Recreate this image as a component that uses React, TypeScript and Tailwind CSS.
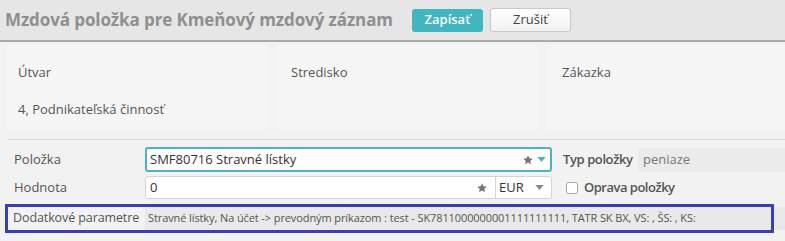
import React from "react";

const Star = ({ className }: { className?: string }) => (
  <svg viewBox="0 0 24 24" className={className} fill="currentColor">
    <path d="M12 2.5l2.9 6.2 6.6.7-4.9 4.5 1.4 6.6L12 17.1l-5.9 3.4 1.4-6.6-4.9-4.5 6.6-.7z" />
  </svg>
);

const Caret = ({ className }: { className?: string }) => (
  <svg viewBox="0 0 10 6" className={className} fill="currentColor">
    <path d="M0 0h10L5 6z" />
  </svg>
);

const App = () => {
  return (
    <div className="relative w-[785px] h-[241px] overflow-hidden bg-[#f2f2f2] font-['Open_Sans',sans-serif] text-[13px] text-[#555]">
      {/* header */}
      <div className="flex h-[42px] items-center border-b-2 border-[#a9a9a9] bg-[#e6e6e6] pl-[5px]">
        <h1 className="whitespace-nowrap text-[17px] font-bold tracking-[-0.1px] text-[#8f8f8f]">
          Mzdová položka pre Kmeňový mzdový záznam
        </h1>
        <button className="ml-[19px] h-[23px] w-[71px] rounded-[3px] bg-[#3fb6c0] text-[13px] font-semibold text-white">
          Zapísať
        </button>
        <button className="ml-[7px] h-[24px] w-[81px] rounded-[3px] border border-[#c8c8c8] bg-gradient-to-b from-white to-[#f1f1f1] text-[13px] text-[#444]">
          Zrušiť
        </button>
      </div>

      {/* top info panels */}
      <div className="flex gap-[8px] pl-[7px] pt-[3px]">
        <div className="h-[85px] w-[261px] shrink-0 bg-[#f5f5f6] px-[11px] pt-[18px]">
          <div className="leading-[18px]">Útvar</div>
          <div className="mt-[19px] leading-[18px]">4, Podnikateľská činnosť</div>
        </div>
        <div className="h-[85px] w-[263px] shrink-0 bg-[#f5f5f6] px-[15px] pt-[18px]">
          <div className="leading-[18px]">Stredisko</div>
        </div>
        <div className="h-[85px] flex-1 bg-[#f5f5f6] px-[15px] pt-[18px]">
          <div className="leading-[18px]">Zákazka</div>
        </div>
      </div>

      <div className="ml-[8px] mt-[9px] border-t border-[#d9d9d9]" />

      {/* form rows */}
      <div className="flex flex-col gap-[4px] pt-[7px]">
        <div className="flex h-[25px] items-center">
          <div className="w-[145px] shrink-0 whitespace-nowrap pl-[14px]">Položka</div>
          <div className="flex h-[25px] w-[407px] shrink-0 items-center rounded-[3px] border-2 border-[#4cb4bc] bg-white pl-[3px] pr-[4px] text-[#333]">
            <span className="flex-1">SMF80716 Stravné lístky</span>
            <Star className="h-[12px] w-[12px] text-[#777]" />
            <Caret className="ml-[3px] h-[5px] w-[9px] text-[#4cb4bc]" />
          </div>
          <div className="ml-[11px] w-[75px] shrink-0 whitespace-nowrap font-semibold tracking-[-0.4px]">Typ položky</div>
          <div className="flex h-[24px] flex-1 items-center bg-[#ebebeb] pl-[5px] text-[#777]">
            peniaze
          </div>
        </div>

        <div className="flex h-[23px] items-center">
          <div className="w-[145px] shrink-0 whitespace-nowrap pl-[14px]">Hodnota</div>
          <div className="flex h-[23px] w-[351px] shrink-0 items-center rounded-l-[3px] border border-[#d4d4d4] bg-white pl-[4px] pr-[7px] text-[#333]">
            <span className="flex-1">0</span>
            <Star className="h-[12px] w-[12px] text-[#777]" />
          </div>
          <div className="flex h-[23px] w-[56px] shrink-0 items-center rounded-r-[3px] border border-l-0 border-[#d4d4d4] bg-white pl-[3px] pr-[7px] text-[#333]">
            <span className="flex-1">EUR</span>
            <Caret className="h-[5px] w-[9px] text-[#888]" />
          </div>
          <input
            type="checkbox"
            className="ml-[14px] h-[12px] w-[12px] shrink-0 appearance-none rounded-[3px] border border-[#aaa] bg-white"
          />
          <span className="ml-[6px] whitespace-nowrap font-semibold tracking-[-0.5px]">Oprava položky</span>
        </div>

        <div className="relative mt-[4px] flex h-[23px] items-center">
          <div className="w-[145px] shrink-0 whitespace-nowrap pl-[13px] text-[12.5px] tracking-[-0.1px]">Dodatkové parametre</div>
          <div className="flex h-[23px] min-w-0 flex-1 items-center whitespace-nowrap bg-[#e9e9e9] pl-[3px] text-[11px] tracking-[-0.1px]">
            Stravné lístky, Na účet -&gt; prevodným príkazom : test - SK7811000000001111111111, TATR SK BX, VS: , ŠS: , KS:
          </div>
          <div className="pointer-events-none absolute left-[5px] top-[-3px] h-[29px] w-[769px] border-[3px] border-[#3a3fb1]" />
        </div>
      </div>
    </div>
  );
};

export default App;
